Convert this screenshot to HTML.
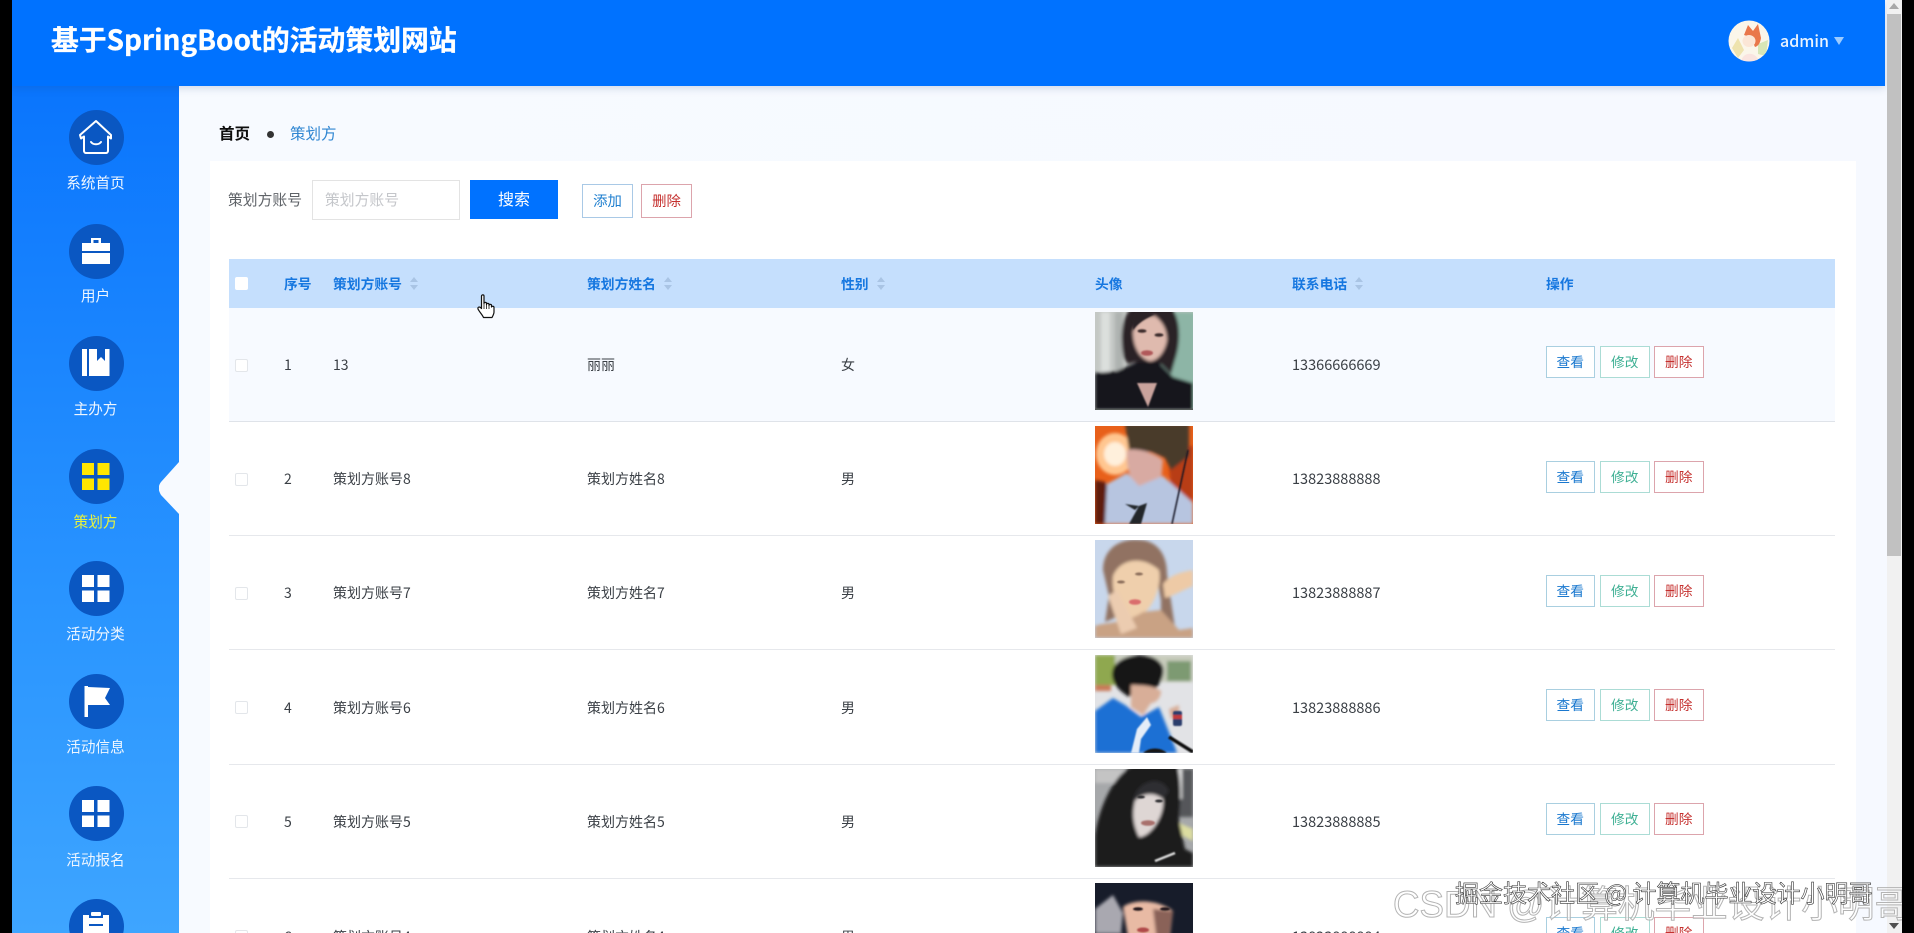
<!DOCTYPE html>
<html lang="zh-CN"><head><meta charset="utf-8"><title>基于SpringBoot的活动策划网站</title>
<style>
html,body{margin:0;padding:0;width:1914px;height:933px;overflow:hidden;background:#000}
*{box-sizing:border-box}
body{position:relative;font-family:"Noto Sans CJK SC","Liberation Sans",sans-serif;font-size:14px;color:#3a3f45}
#wrap{position:absolute;left:0;top:0;width:1914px;height:933px;overflow:hidden;filter:blur(.35px)}
.a{position:absolute;white-space:nowrap}
.tx{position:absolute;white-space:nowrap;height:20px;line-height:20px;margin-top:-10px}
#main{position:absolute;left:12px;top:0;width:1875px;height:933px;overflow:hidden;background:linear-gradient(90deg,#f7faff 0,#f6f9ff 100%)}
#hd{position:absolute;left:12px;top:0;width:1873px;height:86px;background:#0072ff;box-shadow:0 2px 8px rgba(30,60,120,.18)}
#sb{position:absolute;left:12px;top:86px;width:167px;height:847px;background:linear-gradient(180deg,#0a75fd 0,#2a95ff 62%,#3ea5ff 100%)}
.c{position:absolute;left:68.5px;width:55px;height:55px;border-radius:50%;background:#0a57c2}
.l{position:absolute;left:12px;width:167px;text-align:center;color:#eef6ff;font-size:14.6px;height:22px;line-height:22px;margin-top:-10px}
.th{font-weight:700;color:#1677e0;font-size:13.8px}
.car{position:absolute;width:8px;height:13px}
.ck{position:absolute;left:235px;width:13px;height:13px;border:1px solid #e3e6ea;border-radius:2px;background:#fff}
.b{position:absolute;height:32px;border:1px solid;background:#fff;text-align:center;line-height:29px;font-size:13.7px}
.v{left:1545.5px;width:49.5px;border-color:#a9cfe0;color:#1a78cf}
.m{left:1600px;width:49.5px;border-color:#abdcd5;color:#3fb094}
.d{left:1654px;width:49.5px;border-color:#dca4ac;color:#c5302e}
.p{position:absolute;left:1095px;width:98px;height:98px;display:block}
.line{position:absolute;left:229px;width:1606px;height:1px;background:#e6e8ec}
</style></head><body>
<div id="wrap">
<div id="main"></div>
<div class="a" style="left:210px;top:161px;width:1646px;height:772px;background:#fff"></div>

<!-- breadcrumb -->
<div class="tx" style="left:219px;top:133px;font-size:15.5px;font-weight:700;color:#0d0d0d">首页</div>
<div class="a" style="left:267px;top:131px;width:7px;height:7px;border-radius:50%;background:#333"></div>
<div class="tx" style="left:290px;top:133px;font-size:15.5px;color:#2f86d2">策划方</div>

<!-- search bar -->
<div class="tx" style="left:228px;top:200px;font-size:14.8px;color:#5f6368">策划方账号</div>
<div class="a" style="left:312px;top:180px;width:148px;height:40px;border:1px solid #e3e3e3;background:#fff"></div>
<div class="tx" style="left:325px;top:200px;font-size:14.8px;color:#c4c6ca">策划方账号</div>
<div class="a" style="left:470px;top:180px;width:88px;height:39px;background:#0072ff;color:#fff;font-size:16px;text-align:center;line-height:37px">搜索</div>
<div class="a" style="left:582px;top:184px;width:51px;height:34px;border:1px solid #a9c9e6;background:#fff;color:#1f7fcf;font-size:14.4px;text-align:center;line-height:31px">添加</div>
<div class="a" style="left:641px;top:184px;width:51px;height:34px;border:1px solid #dca4ac;background:#fff;color:#c5302e;font-size:14.4px;text-align:center;line-height:31px">删除</div>

<!-- table header -->
<div class="a" style="left:229px;top:259px;width:1606px;height:49px;background:#c5dffd"></div>
<div class="a" style="left:235px;top:277px;width:13px;height:13px;background:#fff;border-radius:2px"></div>
<div class="tx th" style="left:284px;top:283px">序号</div>
<div class="tx th" style="left:333px;top:283px">策划方账号</div>
<div class="tx th" style="left:587px;top:283px">策划方姓名</div>
<div class="tx th" style="left:841px;top:283px">性别</div>
<div class="tx th" style="left:1095px;top:283px">头像</div>
<div class="tx th" style="left:1292px;top:283px">联系电话</div>
<div class="tx th" style="left:1546px;top:283px">操作</div>
<svg class="car" style="left:410px;top:277px" viewBox="0 0 8 13"><path d="M4 0L8 5H0ZM4 13L0 8H8Z" fill="#a9c4e4"/></svg>
<svg class="car" style="left:664px;top:277px" viewBox="0 0 8 13"><path d="M4 0L8 5H0ZM4 13L0 8H8Z" fill="#a9c4e4"/></svg>
<svg class="car" style="left:877px;top:277px" viewBox="0 0 8 13"><path d="M4 0L8 5H0ZM4 13L0 8H8Z" fill="#a9c4e4"/></svg>
<svg class="car" style="left:1355px;top:277px" viewBox="0 0 8 13"><path d="M4 0L8 5H0ZM4 13L0 8H8Z" fill="#a9c4e4"/></svg>

<!-- rows -->
<div class="a" style="left:229px;top:308px;width:1606px;height:113px;background:#f7faff"></div>
<div class="line" style="top:421px;background:#dfe3e9"></div>
<div class="line" style="top:535px"></div>
<div class="line" style="top:649px"></div>
<div class="line" style="top:764px"></div>
<div class="line" style="top:878px"></div>

<div class="ck" style="top:359px"></div><div class="tx" style="left:284px;top:365px">1</div><div class="tx" style="left:333px;top:365px">13</div><div class="tx" style="left:587px;top:365px">丽丽</div><div class="tx" style="left:841px;top:365px">女</div><div class="tx" style="left:1292px;top:365px;font-size:14.5px">13366666669</div>
<div class="b v" style="top:346px">查看</div><div class="b m" style="top:346px">修改</div><div class="b d" style="top:346px">删除</div>

<div class="ck" style="top:473px"></div><div class="tx" style="left:284px;top:479px">2</div><div class="tx" style="left:333px;top:479px">策划方账号8</div><div class="tx" style="left:587px;top:479px">策划方姓名8</div><div class="tx" style="left:841px;top:479px">男</div><div class="tx" style="left:1292px;top:479px;font-size:14.5px">13823888888</div>
<div class="b v" style="top:461px">查看</div><div class="b m" style="top:461px">修改</div><div class="b d" style="top:461px">删除</div>

<div class="ck" style="top:587px"></div><div class="tx" style="left:284px;top:593px">3</div><div class="tx" style="left:333px;top:593px">策划方账号7</div><div class="tx" style="left:587px;top:593px">策划方姓名7</div><div class="tx" style="left:841px;top:593px">男</div><div class="tx" style="left:1292px;top:593px;font-size:14.5px">13823888887</div>
<div class="b v" style="top:575px">查看</div><div class="b m" style="top:575px">修改</div><div class="b d" style="top:575px">删除</div>

<div class="ck" style="top:701px"></div><div class="tx" style="left:284px;top:708px">4</div><div class="tx" style="left:333px;top:708px">策划方账号6</div><div class="tx" style="left:587px;top:708px">策划方姓名6</div><div class="tx" style="left:841px;top:708px">男</div><div class="tx" style="left:1292px;top:708px;font-size:14.5px">13823888886</div>
<div class="b v" style="top:689px">查看</div><div class="b m" style="top:689px">修改</div><div class="b d" style="top:689px">删除</div>

<div class="ck" style="top:815px"></div><div class="tx" style="left:284px;top:822px">5</div><div class="tx" style="left:333px;top:822px">策划方账号5</div><div class="tx" style="left:587px;top:822px">策划方姓名5</div><div class="tx" style="left:841px;top:822px">男</div><div class="tx" style="left:1292px;top:822px;font-size:14.5px">13823888885</div>
<div class="b v" style="top:803px">查看</div><div class="b m" style="top:803px">修改</div><div class="b d" style="top:803px">删除</div>

<!-- row 6, cut off by the viewport -->
<div class="a" style="left:0;top:900px;width:1914px;height:33px;overflow:hidden">
<div class="ck" style="top:30px"></div><div class="tx" style="left:284px;top:37px">6</div><div class="tx" style="left:333px;top:37px">策划方账号4</div><div class="tx" style="left:587px;top:37px">策划方姓名4</div><div class="tx" style="left:841px;top:37px">男</div><div class="tx" style="left:1292px;top:37px;font-size:14.5px">13823888884</div>
<div class="b v" style="top:17px">查看</div><div class="b m" style="top:17px">修改</div><div class="b d" style="top:17px">删除</div>
</div>

<!-- photos -->
<svg class="p" style="top:312px" viewBox="0 0 98 98"><defs><filter id="bl" x="-10%" y="-10%" width="120%" height="120%"><feGaussianBlur stdDeviation="1.6"/></filter><filter id="bs" x="-10%" y="-10%" width="120%" height="120%"><feGaussianBlur stdDeviation=".7"/></filter><clipPath id="cp"><rect width="98" height="98"/></clipPath></defs>
<g clip-path="url(#cp)"><rect width="98" height="98" fill="#c4c8c5"/><g filter="url(#bl)"><rect x="66" width="34" height="98" fill="#8db5a6"/><rect x="6" width="9" height="70" fill="#dcdfdd"/><rect x="20" width="8" height="70" fill="#aeb2b0"/><path d="M29 46C24 24 28 0 38 -4H76C86 6 86 30 80 48L76 62L66 52L40 50L33 52Z" fill="#2a2327"/><path d="M38 20C42 8 52 4 60 4C68 10 72 18 72 28C70 40 62 50 54 49C44 46 38 34 38 20Z" fill="#dfbaae"/><path d="M22 59L42 50L63 50L78 65L98 71V98H0V61Z" fill="#13151d"/></g><g filter="url(#bs)"><path d="M38 18C44 10 52 6 60 2L42 -2C38 4 37 12 38 18Z" fill="#2a2327"/><ellipse cx="47" cy="19" rx="4.5" ry="1.8" fill="#3b2a2a"/><ellipse cx="64" cy="23" rx="4.5" ry="1.8" fill="#3b2a2a"/><ellipse cx="52" cy="41" rx="6" ry="2.8" fill="#b0585a"/><path d="M42 71L62 71L53 95Z" fill="#c9a39c"/></g><rect y="96.5" width="98" height="1.5" fill="#555a58"/></g></svg>

<svg class="p" style="top:426px" viewBox="0 0 98 98"><g clip-path="url(#cp)"><rect width="98" height="98" fill="#e8601a"/><g filter="url(#bl)"><ellipse cx="20" cy="28" rx="19" ry="21" fill="#ffc690"/><ellipse cx="20" cy="28" rx="11" ry="12" fill="#fff0dc"/><path d="M0 54L10 56L18 70L12 98H0Z" fill="#5f1a0a"/><path d="M72 20H98V76L76 62Z" fill="#b83d12"/><path d="M30 -2H94V30L76 44L70 32L56 26L34 24Z" fill="#4a3a2a"/><path d="M32 24C42 22 58 26 68 34L66 56L40 62C34 52 31 38 32 24Z" fill="#d8aaa2"/><path d="M10 98L12 58L32 47L44 60L68 50L98 77V98Z" fill="#b7c5e0"/></g><g filter="url(#bs)"><path d="M34 98L44 80L52 77L46 98Z" fill="#20262c"/><path d="M30 78L44 80L40 84Z" fill="#20262c"/><path d="M77 98L93 24" stroke="#181820" stroke-width="1.5" fill="none"/></g></g></svg>

<svg class="p" style="top:540px" viewBox="0 0 98 98"><g clip-path="url(#cp)"><rect width="98" height="98" fill="#c8d7ec"/><g filter="url(#bl)"><path d="M8 30C8 8 26 -2 44 0C60 0 72 12 72 34L80 88L66 90L66 60L60 28L24 32L20 58L24 76L10 82L14 56Z" fill="#917262"/><path d="M18 36C24 20 46 14 64 30C68 48 54 78 38 78C24 74 16 54 18 36Z" fill="#efcfac"/><path d="M68 44C76 34 88 32 98 30V46C88 50 78 56 70 58Z" fill="#eecaa6"/><path d="M0 86C10 82 30 84 48 72L66 70L84 90L98 88V98H0Z" fill="#c9a284"/><path d="M13 56L22 50L42 88L26 94Z" fill="#ecccb0"/></g><g filter="url(#bs)"><ellipse cx="40" cy="62" rx="6" ry="2.8" fill="#da6d6d"/><ellipse cx="26" cy="42" rx="4" ry="1.5" fill="#8a6d5a"/><ellipse cx="44" cy="34" rx="4" ry="1.5" fill="#8a6d5a"/></g></g></svg>

<svg class="p" style="top:655px" viewBox="0 0 98 98"><g clip-path="url(#cp)"><rect width="98" height="98" fill="#e2e3e6"/><g filter="url(#bl)"><rect width="98" height="27" fill="#c8ccbc"/><rect width="20" height="30" fill="#8fa84f"/><rect x="72" y="6" width="24" height="20" fill="#7d9a72"/><rect x="0" y="30" width="16" height="6" fill="#c97a5a"/><path d="M18 14C24 -2 60 -6 68 12C70 22 64 30 60 34L40 36L34 42C24 36 14 26 18 14Z" fill="#151317"/><path d="M36 30C44 30 58 30 66 36C66 44 60 48 56 48L48 60L36 52Z" fill="#d8ae98"/><path d="M0 56L18 43L30 50L46 62L64 52L80 92L82 98H0Z" fill="#1f6fd4"/><path d="M74 54L84 50L84 62L76 64Z" fill="#d8ae98"/></g><g filter="url(#bs)"><path d="M36 98L42 74L52 62L56 70L46 84L44 98Z" fill="#e4edf8"/><rect x="78" y="56" width="9" height="15" rx="2" fill="#2c3c6c"/><rect x="78" y="60" width="9" height="4" fill="#c23a3a"/><path d="M74 82L98 97" stroke="#111" stroke-width="3.5"/><path d="M48 98C54 92 66 92 72 98Z" fill="#181818"/></g></g></svg>

<svg class="p" style="top:769px" viewBox="0 0 98 98"><g clip-path="url(#cp)"><rect width="98" height="98" fill="#a6a8aa"/><g filter="url(#bl)"><rect x="0" width="30" height="14" fill="#c4c4c4"/><rect x="84" width="14" height="48" fill="#55575a"/><rect x="83" y="0" width="4" height="30" fill="#e8e8e8"/><path d="M84 54L98 60V72L86 66Z" fill="#dcdda0"/><path d="M0 98V68C4 34 24 -4 44 -4H82C88 18 84 44 84 52L90 80L98 84V98Z" fill="#1d1c1f"/><path d="M40 32C44 18 64 18 68 30C70 46 56 68 44 68C38 56 37 44 40 32Z" fill="#ded6d4"/><path d="M38 34C40 12 66 4 74 22L68 30C58 22 46 24 38 34Z" fill="#2f2e33"/></g><g filter="url(#bs)"><ellipse cx="53" cy="54" rx="7" ry="2.8" fill="#a8706c"/><ellipse cx="46" cy="28" rx="4" ry="1.5" fill="#2b2a2e"/><ellipse cx="64" cy="32" rx="4" ry="1.5" fill="#2b2a2e"/><path d="M60 92L80 84" stroke="#dcdcdc" stroke-width="2.5"/></g></g></svg>

<div class="a" style="left:0;top:883px;width:1914px;height:50px;overflow:hidden">
<svg class="p" style="top:0" viewBox="0 0 98 98"><g clip-path="url(#cp)"><rect width="98" height="98" fill="#171c2a"/><g filter="url(#bl)"><path d="M0 26L18 12L28 30L26 50L0 50Z" fill="#a9a8b0"/><path d="M28 24C38 16 62 16 78 28L74 60L34 60Z" fill="#e8baa4"/><path d="M0 50H28L32 60H0Z" fill="#3c3e48"/><path d="M58 26L78 28L74 56L62 60Z" fill="#8a6258"/></g><g filter="url(#bs)"><ellipse cx="43" cy="26" rx="5" ry="1.8" fill="#24181a"/><ellipse cx="70" cy="26" rx="5" ry="1.8" fill="#24181a"/><ellipse cx="48" cy="47" rx="6" ry="2.5" fill="#b04a4a"/></g></g></svg>
</div>

<!-- sidebar -->
<div id="sb"></div>
<svg class="a" style="left:159px;top:462px" width="20" height="54" viewBox="0 0 20 54"><path d="M20 0L2 20C-1 24 -1 28 2 33L20 52Z" fill="#f7faff"/></svg>
<div id="hd"></div>
<div class="tx" style="left:51px;top:39px;height:36px;line-height:36px;margin-top:-18px;font-size:27.85px;font-weight:700;color:#fff;-webkit-text-stroke:.3px #fff">基于SpringBoot的活动策划网站</div>

<div class="c" style="top:110px"></div>
<svg class="a" style="left:78px;top:119px" width="36" height="36" viewBox="0 0 36 36" fill="none" stroke="#fff" stroke-width="2" stroke-linejoin="round" stroke-linecap="round"><path d="M2 16L18 2L33 16V19.5L30 17.5V32C30 33 29 34 28 34H8C7 34 6 33 6 32V17.5L3 19.5Z"/><path d="M13 23C15 26 21 26 23 23"/></svg>
<div class="l" style="top:182px">系统首页</div>

<div class="c" style="top:223.5px"></div>
<svg class="a" style="left:82px;top:237px" width="28" height="28" viewBox="0 0 28 28" fill="#fff"><path fill-rule="evenodd" d="M9 1H19V6H28V14H0V6H9ZM11.5 3V6H16.5V3Z"/><rect y="16" width="28" height="11"/></svg>
<div class="l" style="top:295px">用户</div>

<div class="c" style="top:336px"></div>
<svg class="a" style="left:82px;top:349px" width="28" height="28" viewBox="0 0 28 28" fill="#fff"><rect y="0" width="5" height="27"/><path d="M7 0H15V12L19 8L23 12V0H27.5V27H7Z"/></svg>
<div class="l" style="top:408px">主办方</div>

<div class="c" style="top:449px"></div>
<svg class="a" style="left:82px;top:463px" width="28" height="27" viewBox="0 0 28 27" fill="#ffe600"><rect width="12" height="12"/><rect x="15.5" width="12" height="12"/><rect y="15.5" width="12" height="12"/><rect x="15.5" y="15.5" width="12" height="12"/></svg>
<div class="l" style="top:521px;color:#e9f33c">策划方</div>

<div class="c" style="top:561px"></div>
<svg class="a" style="left:82px;top:575px" width="28" height="27" viewBox="0 0 28 27" fill="#fff"><rect width="12" height="12"/><rect x="15.5" width="12" height="12"/><rect y="15.5" width="12" height="12"/><rect x="15.5" y="15.5" width="12" height="12"/></svg>
<div class="l" style="top:633px">活动分类</div>

<div class="c" style="top:674px"></div>
<svg class="a" style="left:82px;top:685px" width="30" height="33" viewBox="0 0 30 33" fill="#fff"><path d="M2.5 1H6V2L28 3L23 13L28 20H6V32H2.5Z"/></svg>
<div class="l" style="top:746px">活动信息</div>

<div class="c" style="top:786px"></div>
<svg class="a" style="left:82px;top:800px" width="28" height="27" viewBox="0 0 28 27" fill="#fff"><rect width="12" height="12"/><rect x="15.5" width="12" height="12"/><rect y="15.5" width="12" height="12"/><rect x="15.5" y="15.5" width="12" height="12"/></svg>
<div class="l" style="top:859px">活动报名</div>

<div class="a" style="left:0;top:899px;width:179px;height:34px;overflow:hidden"><div class="c" style="top:0"></div></div>
<svg class="a" style="left:83px;top:911px" width="26" height="22" viewBox="0 0 26 22" fill="#fff"><rect x="8" y="1" width="10" height="4" rx="1"/><path fill-rule="evenodd" d="M0 4H6V7H20V4H26V22H0ZM6 13V15H20V13Z"/></svg>

<!-- header right -->
<svg class="a" style="left:1728px;top:20px" width="42" height="42" viewBox="0 0 42 42"><defs><clipPath id="av"><circle cx="21" cy="21" r="20.5"/></clipPath></defs><circle cx="21" cy="21" r="20.5" fill="#fbf6ea"/><g clip-path="url(#av)"><path d="M4 28L10 18L16 30L10 38Z" fill="#eee3ae"/><path d="M30 24L40 20L38 36L30 34Z" fill="#d8e6b6"/><path d="M16 15L20 5L25 11L30 4L33 18C32 24 30 26 27 27C24 20 20 16 16 15Z" fill="#e9774a"/><ellipse cx="21" cy="21" rx="6.5" ry="6" fill="#fbe6d6"/><path d="M13 42C14 32 28 30 31 42Z" fill="#fae4df"/></g></svg>
<div class="tx" style="left:1780px;top:40px;font-size:16px;color:#eaf4ff;font-weight:500">admin</div>
<svg class="a" style="left:1834px;top:37px" width="10" height="8" viewBox="0 0 10 8"><path d="M0 0H10L5 8Z" fill="#9ccbff"/></svg>

<!-- scrollbar -->
<div class="a" style="left:1887px;top:0;width:15px;height:933px;background:#f1f1f1"></div>
<div class="a" style="left:1887px;top:14px;width:13.5px;height:542px;background:#c1c1c1"></div>
<svg class="a" style="left:1889px;top:3px" width="10" height="6" viewBox="0 0 10 6"><path d="M5 0L10 6H0Z" fill="#a8a8a8"/></svg>
<svg class="a" style="left:1889px;top:923px" width="10" height="6" viewBox="0 0 10 6"><path d="M0 0H10L5 6Z" fill="#505050"/></svg>

<!-- cursor -->
<svg class="a" style="left:477px;top:294px" width="20" height="25" viewBox="0 0 20 25"><path d="M4.5 2C4.5 0.5 7 0.5 7 2V9.5C7 8 9.5 8 9.5 9.5V10.5C9.5 9 12 9 12 10.5V11.5C12 10 14.5 10 14.5 11.5V13C15 11.8 17 12 17 13.5V18C17 20 16 21.5 15 23.5H6.5C5.5 21 2.5 18 1 15C0.5 13 2.5 12 4.5 14.5Z" fill="#fff" stroke="#111" stroke-width="1.2" stroke-linejoin="round"/><path d="M7 10V15M9.5 11V15M12 11.5V15" stroke="#111" stroke-width=".8"/></svg>

<!-- watermarks -->
<div class="a" style="left:1393px;top:880px;height:50px;line-height:50px;font-family:'Liberation Sans','Noto Sans CJK SC',sans-serif;font-size:36.7px;color:rgba(255,255,255,.6);-webkit-text-stroke:1px #b4b4b4">CSDN @计算机毕业设计小明哥</div>
<div class="a" style="left:1455px;top:875px;height:34px;line-height:34px;font-family:'Noto Sans CJK SC','Liberation Sans',sans-serif;font-size:24px;color:#fff;-webkit-text-stroke:.6px #333">掘金技术社区 @ 计算机毕业设计小明哥</div>

<!-- black letterbox bars -->
<div class="a" style="left:0;top:0;width:12px;height:933px;background:#000"></div>
<div class="a" style="left:1902px;top:0;width:12px;height:933px;background:#000"></div>
</div>
</body></html>
